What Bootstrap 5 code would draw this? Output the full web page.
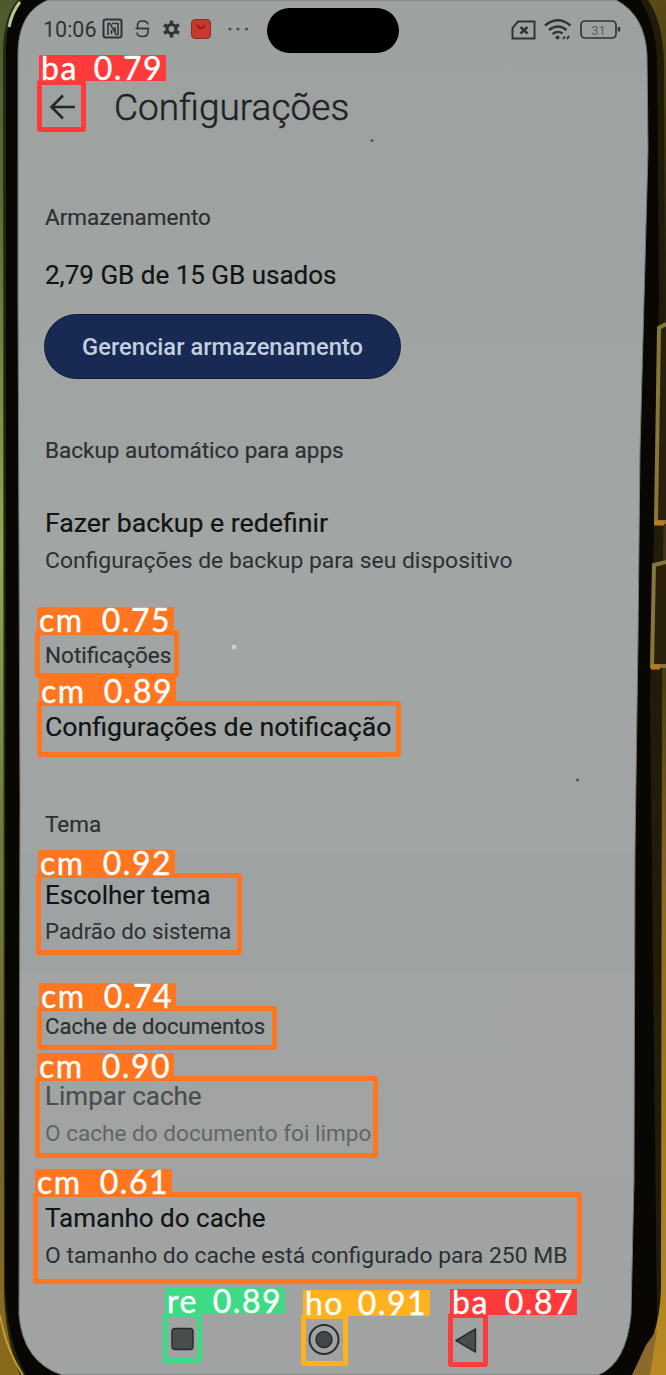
<!DOCTYPE html>
<html lang="pt-BR">
<head>
<meta charset="utf-8">
<title>Configurações</title>
<link rel="stylesheet" href="https://cdn.jsdelivr.net/npm/bootstrap@5.3.0/dist/css/bootstrap.min.css">
<style>
body{background:#0a0903;font-family:Roboto,"Liberation Sans",sans-serif;color:#1d2122}
.phone{width:666px;height:1375px}
.shell{left:0;top:0;z-index:0}
.screen{z-index:1;padding-left:45px;height:1375px}
.status-row{height:60px}
.clock{font-size:21.5px;width:53px;color:#303436;margin-left:-2px}
.title-row{height:94px}
.title-text{font-size:37px;font-weight:300;line-height:44px;margin-left:37px;padding-top:2px;-webkit-text-stroke:.5px #24282a}
.ln{line-height:32px;white-space:nowrap;width:max-content}
.sec{font-size:22.5px;color:#2c3032;-webkit-text-stroke:.2px}
.sec-sm{font-size:22.1px}
.ttl{font-size:26px;color:#111415;-webkit-text-stroke:.2px}
.ttl-lg{font-size:26.7px}
.sub{font-size:22.9px;color:#2c3032}
.sub-sm{font-size:22.3px}
.sub-md{font-size:22.6px}
.off{color:#4a4e4f}
.off-sub{color:#626566}
.pill,.pill:hover{width:357px;height:65px;background:#182a54;color:#c3cfdf;font-size:23.7px;font-weight:500;border:1.5px solid #0f1a35;margin-left:-1px}
.cutout{left:267px;top:8px;width:132px;height:45px;background:#000;z-index:2}
.det-box{z-index:3;border:5px solid var(--c);border-radius:3px}
.det-tag{z-index:4;background:var(--c);color:#fff;font-family:Lato,sans-serif;font-size:32px;letter-spacing:1.5px;line-height:25px;height:26px;padding:0 3px 0 2px;-webkit-text-stroke:.4px #fff;white-space:nowrap}
.c-or{--c:#ff7520}.c-rd{--c:#ff3a3a}.c-gr{--c:#3ddb86}.c-ye{--c:#ffb21d}
.nav-row{margin-top:47px;margin-left:124px;gap:115px}
</style>
</head>
<body>
<main class="phone position-relative overflow-hidden">
<svg class="shell position-absolute" width="666" height="1375" viewBox="0 0 666 1375" aria-hidden="true">
<defs>
<linearGradient id="gl" x2="0" y2="1"><stop offset="0" stop-color="#4d5a2c"/><stop offset=".15" stop-color="#5d6a35"/><stop offset=".4" stop-color="#93a657"/><stop offset=".6" stop-color="#6f7a42"/><stop offset=".85" stop-color="#75662f"/><stop offset="1" stop-color="#8a6a1c"/></linearGradient>
<linearGradient id="gr" x2="0" y2="1"><stop offset="0" stop-color="#5a4a15"/><stop offset=".2" stop-color="#2a210a"/><stop offset=".5" stop-color="#4f3d12"/><stop offset=".65" stop-color="#8a6824"/><stop offset="1" stop-color="#b98a20"/></linearGradient>
<linearGradient id="sc" x2="0" y2="1"><stop offset="0" stop-color="#9da2a0"/><stop offset=".4" stop-color="#a1a5a4"/><stop offset="1" stop-color="#a0a3a2"/></linearGradient>
</defs>
<rect width="666" height="1375" fill="#080703"/>
<path d="M0 0H22Q8 12 6 45L5 1290Q8 1345 26 1375H0Z" fill="#27290f"/>
<path d="M0 0H18Q4 14 3 50L4 1290Q5 1340 20 1375H0Z" fill="url(#gl)"/>
<path d="M9 27Q12 12 20 2" stroke="#b4c99b" stroke-width="3" fill="none"/>
<path d="M0 1315Q6 1350 23 1375" stroke="#c59a36" stroke-width="2" fill="none"/>
<path d="M640 0Q655 20 657 60L659 300 650 700 657 1320 640 1375H666V0Z" fill="#211c09"/>
<path d="M648 0Q663 22 664 62L665 320 662 700 661 1290Q659 1340 635 1375H666V0Z" fill="url(#gr)"/>
<path d="M646 1345L632 1375H650L657 1330Z" fill="#8a6b2c"/>
<path d="M660 326L656 522H666V326ZM655 564L652 666H666V564Z" fill="#2a1f0a"/>
<path d="M666 324L659 328 656 522H666M666 562L654 565 652 666H666" stroke="#85763a" stroke-width="4" fill="none"/>
<path d="M654 523H664M651 667H660" stroke="#b97c1d" stroke-width="5"/>
<path d="M48 0C30 8 19 22 18 52L18 300 20 800 19 1315Q23 1362 62 1375H598Q626 1364 631 1315L634 1180 635 850 638 640 640 450 644 300 648 150 647 55Q645 15 616 0Z" fill="url(#sc)" stroke="#6f7772" stroke-width="1"/>
<path d="M21 853H634V971H21Z" fill="#989d9e" opacity=".2"/>
<circle cx="372" cy="140.500" r="1.500" fill="#555a5b"/><circle cx="234" cy="647" r="2.500" fill="#ccd0cf"/><circle cx="577.500" cy="780" r="1.500" fill="#4d5253"/>
</svg>
<div class="cutout position-absolute rounded-pill"></div>

<div class="screen position-relative d-flex flex-column">
<header class="status-row d-flex align-items-center">
<span class="clock ln">10:06</span>
<svg width="155" height="30" viewBox="97 15 155 30" fill="none" stroke="#303436" stroke-width="2">
<rect x="103.500" y="19.500" width="18" height="18" rx="2"/><path d="M108 35V23.500H110L115 32.500V27M111.500 30V34M112 23.500H118V34.500H115" stroke-width="1.600"/>
<path d="M148 24.500Q147.500 21 142.500 21 137.500 21 137.500 25V28.500H148V32Q148 36.500 142.500 36.500 137.500 36.500 137 32.500" stroke-width="1.600"/><path d="M135.500 28.500H149.500" stroke-width="1.300"/>
<circle cx="171.500" cy="29" r="4.500" stroke-width="3.200"/><path d="M171.500 20.500V24M171.500 34V37.500M164 24.700L167 26.500M176 31.500L179 33.300M164 33.300L167 31.500M176 26.500L179 24.700" stroke-width="3.500"/>
<rect x="191.500" y="19.500" width="19" height="19" rx="3.500" fill="#c9382c" stroke="#8c2c27" stroke-width="1"/><path d="M197 25Q201 32 205 25" stroke="#7b1915" stroke-width="1.500"/>
<g fill="#4c5051" stroke="none"><circle cx="230" cy="29" r="1.600"/><circle cx="238" cy="29" r="1.600"/><circle cx="246.500" cy="29" r="1.600"/></g>
</svg>
<svg class="ms-auto" width="112" height="30" viewBox="510 15 112 30" style="margin-right:44px" fill="none" stroke="#303436" stroke-width="2">
<path d="M518 21.500H534.500V38.500H512.500V28Z"/><path d="M520.500 27L527.500 33.500M527.500 27L520.500 33.500" stroke-width="2.400"/>
<path d="M545 25.500Q558 15 570.500 25.500M549 30Q558 23 566.500 30M552.500 34Q558 30 562.500 33.500" stroke-width="2.300"/><circle cx="557.500" cy="37.500" r="2" fill="#303436" stroke="none"/><path d="M563 39L565 36.500M567 39L569 36" stroke-width="2"/>
<rect x="581" y="21" width="35" height="17" rx="4" stroke-width="1.700"/><path d="M619 27V31.500" stroke-width="2.400"/><text x="598.500" y="34.500" text-anchor="middle" font-family="Roboto" font-size="13" fill="#5d6162" stroke="none">31</text>
</svg>
</header>
<div class="title-row d-flex align-items-center">
<svg width="32" height="30" viewBox="45 92 32 30" fill="none" stroke="#24282a" stroke-width="2.600"><path d="M75 107H51M63 95.500L51.500 107 63 118.500"/></svg>
<h1 class="title-text mb-0">Configurações</h1>
</div>
<section style="margin-top:47px">
<div class="ln sec">Armazenamento</div>
<div class="ln ttl" style="margin-top:26px">2,79 GB de 15 GB usados</div>
<button class="btn pill rounded-pill p-0" style="margin-top:23px;padding-top:2px!important">Gerenciar armazenamento</button>
</section>
<section style="margin-top:55px">
<div class="ln sec">Backup automático para apps</div>
<div class="ln ttl ttl-lg" style="margin-top:41px">Fazer backup e redefinir</div>
<div class="ln sub" style="margin-top:6px">Configurações de backup para seu dispositivo</div>
</section>
<section style="margin-top:62px">
<div class="ln sec">Notificações</div>
<div class="ln ttl ttl-lg" style="margin-top:40px">Configurações de notificação</div>
</section>
<section style="margin-top:65px">
<div class="ln sec">Tema</div>
<div class="ln ttl" style="margin-top:39px">Escolher tema</div>
<div class="ln sub sub-sm" style="margin-top:4px">Padrão do sistema</div>
</section>
<section style="margin-top:63px">
<div class="ln sec sec-sm">Cache de documentos</div>
<div class="ln ttl off" style="margin-top:38px">Limpar cache</div>
<div class="ln sub sub-md off-sub" style="margin-top:6px">O cache do documento foi limpo</div>
<div class="ln ttl" style="margin-top:52px">Tamanho do cache</div>
<div class="ln sub" style="margin-top:6px">O tamanho do cache está configurado para 250 MB</div>
</section>
<nav class="nav-row d-flex align-items-center" aria-label="Navegação">
<svg width="26" height="40" viewBox="0 0 26 40"><rect x="3" y="9.500" width="21" height="21" rx="3" fill="#4a4d4e" stroke="#2a2d2e" stroke-width="1.500"/></svg>
<svg width="34" height="40" viewBox="-2 0 34 40" style="margin-left:-2px"><circle cx="14" cy="20.500" r="14.500" fill="none" stroke="#2c2f30" stroke-width="2"/><circle cx="14" cy="20.500" r="8" fill="#444748" stroke="#2a2d2e" stroke-width="1.500"/></svg>
<svg width="26" height="40" viewBox="0 0 26 40" style="margin-left:-3px"><path d="M2 21.500L21.500 10V33Z" fill="#4a4d4e" stroke="#2a2d2e" stroke-width="1.500" stroke-linejoin="round"/></svg>
</nav>
</div>

<div class="det-box c-rd position-absolute" style="left:37px;top:80px;width:49px;height:52px"></div>
<div class="det-tag c-rd position-absolute d-flex justify-content-between" style="left:39px;top:55px;width:127px"><span>ba</span><span>0.79</span></div>
<div class="det-box c-or position-absolute" style="left:35px;top:630px;width:144px;height:48px"></div>
<div class="det-tag c-or position-absolute d-flex justify-content-between" style="left:37px;top:607px;width:137px"><span>cm</span><span>0.75</span></div>
<div class="det-box c-or position-absolute" style="left:37px;top:701px;width:364px;height:56px"></div>
<div class="det-tag c-or position-absolute d-flex justify-content-between" style="left:39px;top:678px;width:137px"><span>cm</span><span>0.89</span></div>
<div class="det-box c-or position-absolute" style="left:36px;top:873px;width:206px;height:82px"></div>
<div class="det-tag c-or position-absolute d-flex justify-content-between" style="left:38px;top:850px;width:137px"><span>cm</span><span>0.92</span></div>
<div class="det-box c-or position-absolute" style="left:37px;top:1006px;width:240px;height:44px"></div>
<div class="det-tag c-or position-absolute d-flex justify-content-between" style="left:39px;top:983px;width:137px"><span>cm</span><span>0.74</span></div>
<div class="det-box c-or position-absolute" style="left:35px;top:1076px;width:343px;height:82px"></div>
<div class="det-tag c-or position-absolute d-flex justify-content-between" style="left:37px;top:1053px;width:137px"><span>cm</span><span>0.90</span></div>
<div class="det-box c-or position-absolute" style="left:33px;top:1192px;width:549px;height:92px"></div>
<div class="det-tag c-or position-absolute d-flex justify-content-between" style="left:35px;top:1169px;width:137px"><span>cm</span><span>0.61</span></div>
<div class="det-box c-gr position-absolute" style="left:163px;top:1312px;width:39px;height:51px"></div>
<div class="det-tag c-gr position-absolute d-flex justify-content-between" style="left:165px;top:1288px;width:120px"><span>re</span><span>0.89</span></div>
<div class="det-box c-ye position-absolute" style="left:301px;top:1314px;width:47px;height:52px"></div>
<div class="det-tag c-ye position-absolute d-flex justify-content-between" style="left:303px;top:1290px;width:127px"><span>ho</span><span>0.91</span></div>
<div class="det-box c-rd position-absolute" style="left:448px;top:1313px;width:40px;height:54px"></div>
<div class="det-tag c-rd position-absolute d-flex justify-content-between" style="left:450px;top:1289px;width:127px"><span>ba</span><span>0.87</span></div>
</main>
<script src="https://cdn.jsdelivr.net/npm/bootstrap@5.3.0/dist/js/bootstrap.bundle.min.js"></script>
</body>
</html>
